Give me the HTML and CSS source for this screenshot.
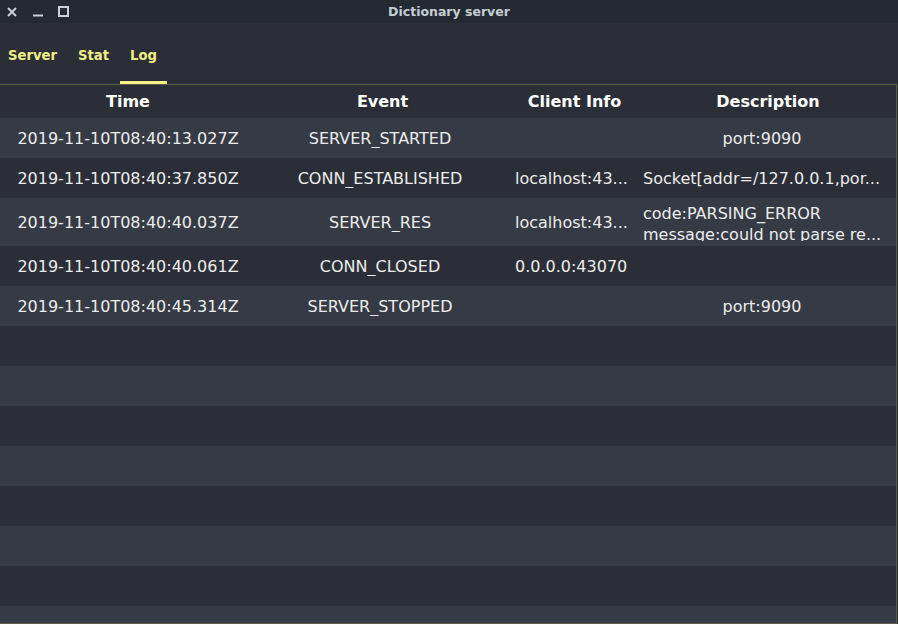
FILE: index.html
```html
<!DOCTYPE html>
<html>
<head>
<meta charset="utf-8">
<link rel="stylesheet" href="styles.css">
</head>
<body>
<div class="window">
  <header class="titlebar">
    <div class="controls">
      <svg class="ctl" width="12" height="12" viewBox="0 0 12 12"><path d="M2 2 L10 10 M10 2 L2 10" stroke="#c9d1d9" stroke-width="2" fill="none"/></svg>
      <svg class="ctl" width="12" height="12" viewBox="0 0 12 12"><path d="M1 9.5 H11" stroke="#c9d1d9" stroke-width="2" fill="none"/></svg>
      <svg class="ctl" width="12" height="12" viewBox="0 0 12 12"><rect x="1" y="1" width="9" height="9" stroke="#c9d1d9" stroke-width="2" fill="none"/></svg>
    </div>
    <div class="title">Dictionary server</div>
  </header>
  <nav class="tabs">
    <div class="tab">Server</div>
    <div class="tab">Stat</div>
    <div class="tab active">Log</div>
  </nav>
  <div class="table">
    <div class="row head">
      <div class="cell c-time">Time</div>
      <div class="cell c-event">Event</div>
      <div class="cell c-client">Client Info</div>
      <div class="cell c-desc">Description</div>
    </div>
    <div class="row odd">
      <div class="cell c-time">2019-11-10T08:40:13.027Z</div>
      <div class="cell c-event">SERVER_STARTED</div>
      <div class="cell c-client"></div>
      <div class="cell c-desc center">port:9090</div>
    </div>
    <div class="row even">
      <div class="cell c-time">2019-11-10T08:40:37.850Z</div>
      <div class="cell c-event">CONN_ESTABLISHED</div>
      <div class="cell c-client">localhost:43...</div>
      <div class="cell c-desc">Socket[addr=/127.0.0.1,por...</div>
    </div>
    <div class="row odd tall">
      <div class="cell c-time">2019-11-10T08:40:40.037Z</div>
      <div class="cell c-event">SERVER_RES</div>
      <div class="cell c-client">localhost:43...</div>
      <div class="cell c-desc"><div class="clip">code:PARSING_ERROR<br>message:could not parse re...</div></div>
    </div>
    <div class="row even">
      <div class="cell c-time">2019-11-10T08:40:40.061Z</div>
      <div class="cell c-event">CONN_CLOSED</div>
      <div class="cell c-client">0.0.0.0:43070</div>
      <div class="cell c-desc"></div>
    </div>
    <div class="row odd">
      <div class="cell c-time">2019-11-10T08:40:45.314Z</div>
      <div class="cell c-event">SERVER_STOPPED</div>
      <div class="cell c-client"></div>
      <div class="cell c-desc center">port:9090</div>
    </div>
    <div class="row even"></div>
    <div class="row odd"></div>
    <div class="row even"></div>
    <div class="row odd"></div>
    <div class="row even"></div>
    <div class="row odd"></div>
    <div class="row even"></div>
    <div class="row odd"></div>
  </div>
</div>
</body>
</html>
```

FILE: styles.css
```css
html, body {
  margin: 0;
  padding: 0;
  background: #2b2e37;
}
.window {
  width: 898px;
  height: 624px;
  display: flex;
  flex-direction: column;
  overflow: hidden;
  font-family: "DejaVu Sans", sans-serif;
}
.titlebar {
  height: 23px;
  flex: none;
  background: #242a31;
  display: flex;
  align-items: center;
  position: relative;
}
.controls {
  display: flex;
  gap: 14px;
  padding-left: 6px;
  align-items: center;
  height: 23px;
}
.ctl { display: block; }
.title {
  position: absolute;
  left: 0;
  right: 0;
  top: 0;
  line-height: 23px;
  text-align: center;
  font-weight: bold;
  font-size: 12.5px;
  color: #c5ced6;
  pointer-events: none;
}
.tabs {
  height: 61px;
  flex: none;
  display: flex;
  align-items: stretch;
  background: #2b2e37;
}
.tab {
  font-weight: bold;
  font-size: 13.2px;
  color: #eeee86;
  display: flex;
  align-items: center;
  padding: 6px 8px 0 8px;
  margin-right: 5px;
  box-sizing: border-box;
  border-bottom: 3px solid transparent;
}
.tab.active {
  border-bottom-color: #f3f38a;
  padding: 6px 10px 0 10px;
  margin-left: -2px;
}
.table {
  flex: 1;
  width: 896px;
  border-top: 1px solid #5b5d45;
  border-right: 1px solid #5b5d45;
  border-bottom: 1px solid #5b5d45;
  background: #2b2e37;
  overflow: hidden;
}
.row {
  display: grid;
  grid-template-columns: 256px 253px 131px 1fr;
  height: 40px;
  align-items: center;
  color: #ececec;
  font-size: 16px;
}
.row.head {
  height: 33px;
  font-weight: bold;
  color: #ffffff;
  background: #2b2e37;
}
.row.odd { background: #363a45; }
.row.even { background: #2b2e37; }
.row.tall { height: 48px; }
.cell {
  white-space: nowrap;
  overflow: hidden;
}
.head .cell { text-align: center; }
.row .c-time { text-align: center; }
.row .c-event { text-align: center; padding-right: 5px; }
.row .c-client { padding-left: 6px; }
.row .c-desc { padding-left: 3px; }
.row .c-desc.center { text-align: center; padding-right: 12px; padding-left: 0; }
.head .cell.c-event, .head .cell.c-client, .head .cell.c-desc { padding: 0; text-align: center; }
.clip {
  height: 38px;
  line-height: 21px;
  overflow: hidden;
}
```
